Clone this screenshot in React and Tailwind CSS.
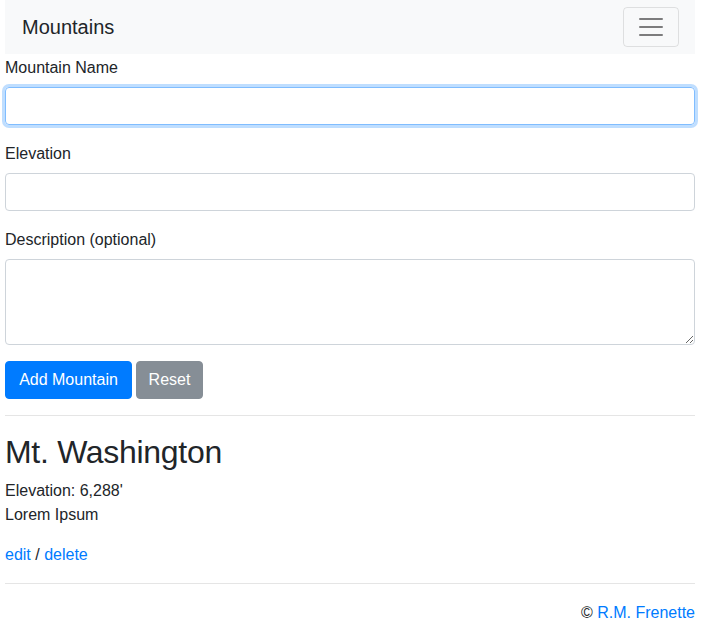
import React from "react";

export default function App() {
  return (
    <div className="min-h-[644px] bg-white text-[#212529] text-[16px] leading-[24px]" style={{ fontFamily: '"Liberation Sans", Arial, sans-serif' }}>
      <div className="ml-[5px] w-[690px]">
        <nav className="h-[54px] bg-[#f8f9fa] flex items-center justify-between px-[16px]">
          <span className="text-[20px] leading-[30px] ml-px">Mountains</span>
          <button className="w-[56px] h-[40px] border border-[rgba(0,0,0,0.1)] rounded-[4px] flex items-center justify-center">
            <svg width="30" height="30" viewBox="0 0 30 30">
              <path d="M4 7h22M4 15h22M4 23h22" stroke="rgba(0,0,0,0.5)" strokeWidth="2" strokeLinecap="round" />
            </svg>
          </button>
        </nav>
        <form className="mt-[1px]">
          <div className="mb-[16px]">
            <label className="block mb-[8px] pt-[1px] leading-[23px]">Mountain Name</label>
            <input className="block w-full h-[38px] px-[12px] border border-[#80bdff] rounded-[4px] outline-none shadow-[0_0_0_3px_rgba(0,123,255,0.25)]" />
          </div>
          <div className="mb-[16px]">
            <label className="block mb-[8px] pt-[1px] leading-[23px]">Elevation</label>
            <input className="block w-full h-[38px] px-[12px] border border-[#ced4da] rounded-[4px] outline-none" />
          </div>
          <div className="mb-[16px]">
            <label className="block mb-[8px] pt-[1px] leading-[23px]">Description (optional)</label>
            <textarea rows={3} className="block w-full h-[86px] px-[12px] py-[6px] border border-[#ced4da] rounded-[4px] outline-none" />
          </div>
          <div className="flex gap-[4px]">
            <button type="button" className="h-[38px] w-[127px] bg-[#007bff] text-white rounded-[4px] border border-[#007bff]">Add Mountain</button>
            <button type="button" className="h-[38px] w-[67px] bg-[#868e96] text-white rounded-[4px] border border-[#868e96]">Reset</button>
          </div>
        </form>
        <hr className="my-[16px] border-0 border-t border-[rgba(0,0,0,0.1)]" />
        <div>
          <h2 className="text-[32px] leading-[38px] font-medium mb-[8px] pt-[1px] tracking-[-0.3px]">Mt. Washington</h2>
          <div>Elevation: 6,288'</div>
          <div className="mb-[16px]">Lorem Ipsum</div>
          <div>
            <a className="text-[#007bff]" href="#">edit</a> / <a className="text-[#007bff]" href="#">delete</a>
          </div>
        </div>
        <hr className="my-[16px] border-0 border-t border-[rgba(0,0,0,0.1)]" />
        <div className="text-right pt-[1px]">
          © <a className="text-[#007bff]" href="#">R.M. Frenette</a>
        </div>
      </div>
    </div>
  );
}
